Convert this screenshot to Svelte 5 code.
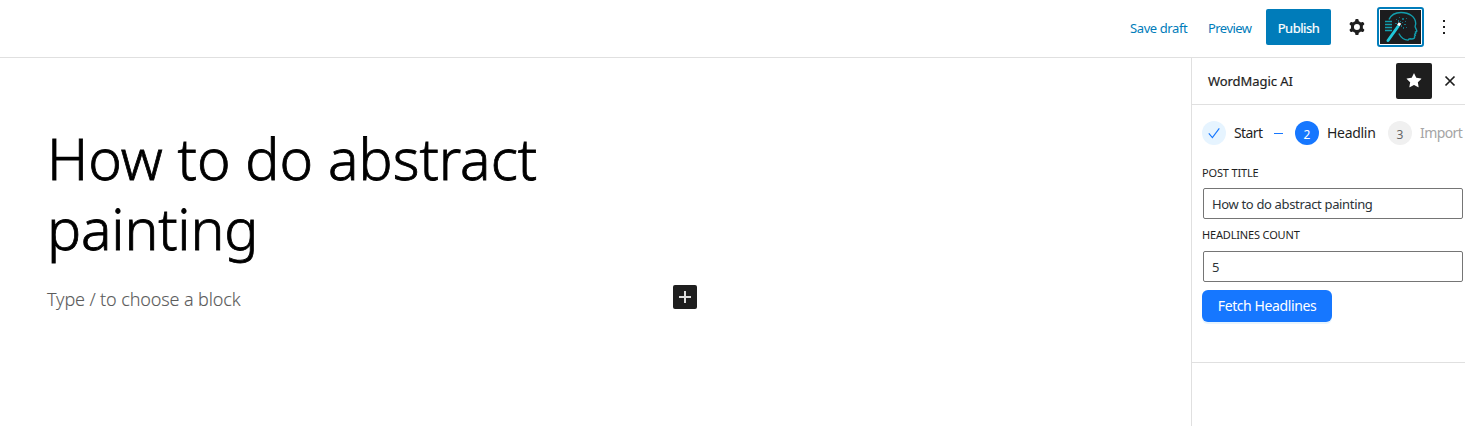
<script>
  let title = $state('How to do abstract painting');
  let count = $state('5');
</script>

<div class="editor">
  <header>
    <button class="link draft">Save draft</button>
    <button class="link preview">Preview</button>
    <button class="publish"><span>Publish</span></button>
    <button class="icon gear" aria-label="Settings">
      <svg width="24" height="24" viewBox="0 0 24 24"><path fill="#1e1e1e" fill-rule="evenodd" d="M10.289 4.836A1 1 0 0 1 11.275 4h1.306a1 1 0 0 1 .987.836l.244 1.466c.787.26 1.503.679 2.108 1.218l1.393-.522a1 1 0 0 1 1.216.437l.653 1.130a1 1 0 0 1-.23 1.273l-1.148.944a6.025 6.025 0 0 1 0 2.435l1.149.946a1 1 0 0 1 .23 1.272l-.653 1.130a1 1 0 0 1-1.216.437l-1.394-.522c-.605.54-1.320.958-2.108 1.218l-.244 1.466a1 1 0 0 1-.987.836h-1.306a1 1 0 0 1-.986-.836l-.244-1.466a5.995 5.995 0 0 1-2.108-1.218l-1.394.522a1 1 0 0 1-1.217-.436l-.653-1.131a1 1 0 0 1 .23-1.272l1.149-.946a6.026 6.026 0 0 1 0-2.435l-1.148-.944a1 1 0 0 1-.23-1.272l.653-1.131a1 1 0 0 1 1.217-.437l1.393.522a5.994 5.994 0 0 1 2.108-1.218l.244-1.466ZM14.929 12a3 3 0 1 1-6 0 3 3 0 0 1 6 0Z"/></svg>
    </button>
    <button class="plugin" aria-label="WordMagic AI">
      <svg width="41" height="34" viewBox="0 0 41 34">
        <rect width="41" height="34" fill="#1c1c1e"/>
        <g fill="none" stroke="#129dad" stroke-width="1.4">
          <path d="M9 9.500C11 5 15 2.500 21 2.500c8.500 0 14.500 4.500 14.700 11 0 1.700-.9 2.500-.5 3.500l1.500 3.600c.3.800 0 1.200-1.200 1.400l.2 1.600-1 .7.600 1-.8.900.1 1.200c-.3 1.700-1.600 1.800-4.500 1.400-1.200 0-1.700.5-2 1.300-3.500.1-7-2.500-9.300-6.600"/>
          <path d="M5 11.500h7M5 14.500h7M5 17.500h7M5 20.500h7"/>
        </g>
        <path d="m8 30.500 10-14" stroke="#20c8da" stroke-width="3" stroke-linecap="round"/>
        <path d="m18.300 15.500 1.700-2.500" stroke="#fff" stroke-width="3"/>
        <g fill="#126f7d"><path d="M16 9h1v1h-1zM19 7h1v1h-1zM22 8h2v2h-2zM25 11h1v1h-1zM24 14h2v1h-2zM22 12h1v1h-1zM23 17h1v2h-1zM26 17h1v1h-1zM15 13h2v1h-2zM18 10h1v2h-1zM21 15h1v2h-1zM20 11h1v1h-1zM26 8h1v1h-1z"/></g>
      </svg>
    </button>
    <button class="icon more" aria-label="Options">
      <svg width="24" height="24" viewBox="0 0 24 24" fill="#1e1e1e"><path d="M11 5h2v2h-2zM11 11h2v2h-2zM11 17h2v2h-2z"/></svg>
    </button>
  </header>

  <div class="body">
    <main>
      <h1><span>How to do abstract</span><br /><span class="second">painting</span></h1>
      <div class="block">
        <p>Type / to choose a block</p>
        <button class="add" aria-label="Add block">
          <svg width="24" height="24" viewBox="0 0 24 24"><path d="M6 12h12M12 6v12" stroke="#dedede" stroke-width="2"/></svg>
        </button>
      </div>
    </main>

    <aside>
      <div class="panel-head">
        <strong>WordMagic AI</strong>
        <button class="star" aria-label="Unpin">
          <svg width="24" height="24" viewBox="0 0 24 24"><path fill="#fff" d="m11.776 4.454a.25.25 0 0 1 .448 0l2.069 4.192a.25.25 0 0 0 .188.137l4.626.672a.25.25 0 0 1 .139.426l-3.348 3.263a.25.25 0 0 0-.072.222l.79 4.607a.25.25 0 0 1-.362.263l-4.138-2.175a.25.25 0 0 0-.232 0l-4.138 2.175a.25.25 0 0 1-.363-.263l.79-4.607a.25.25 0 0 0-.071-.222L4.754 9.881a.25.25 0 0 1 .139-.426l4.626-.672a.25.25 0 0 0 .188-.137z"/></svg>
        </button>
        <button class="close" aria-label="Close">
          <svg width="12" height="12" viewBox="0 0 12 12"><path d="m1.500 1.500 9 9m0-9-9 9" stroke="#1e1e1e" stroke-width="1.700"/></svg>
        </button>
      </div>
      <section>
        <ol class="steps">
          <li class="done">
            <i><svg width="14" height="14" viewBox="0 0 14 14"><path d="m1.800 7.300 3.600 4.300L12.300 2.300" fill="none" stroke="#1677ff" stroke-width="1.150"/></svg></i>
            <span>Start</span><b></b>
          </li>
          <li class="active"><i>2</i><span>Headlines</span></li>
          <li class="wait"><i>3</i><span>Import</span></li>
        </ol>
        <label class="l1" for="title"><span>POST TITLE</span></label>
        <input id="title" bind:value={title} />
        <label class="l2" for="count"><span>HEADLINES COUNT</span></label>
        <input id="count" class="count" bind:value={count} />
        <button class="fetch"><span>Fetch Headlines</span></button>
      </section>
    </aside>
  </div>
</div>

<style>
  :global(body) { margin: 0; background: #fff; }
  * { box-sizing: border-box; }
  button { border: 0; padding: 0; margin: 0; background: none; font: inherit; color: inherit; flex: none; }
  svg { display: block; }
  .editor { width: 1465px; height: 426px; overflow: hidden; display: flex; flex-direction: column; font: 13px/18px "Noto Sans", "Open Sans", sans-serif; color: #1e1e1e; }
  header { height: 58px; flex: none; border-bottom: 1px solid #e0e0e0; display: flex; align-items: center; justify-content: flex-end; padding: 0 9px 3px 0; }
  .link { color: #007cba; text-align: left; white-space: nowrap; padding-top: 2px; }
  .draft { width: 78px; letter-spacing: -0.4px; }
  .preview { width: 58px; letter-spacing: -0.55px; }
  .publish { width: 65px; height: 36px; padding-top: 2px; background: #007cba; color: #fff; border-radius: 2px; letter-spacing: -0.45px; -webkit-text-stroke: 0.2px; }
  .gear { margin-left: 14px; }
  .plugin { width: 47px; height: 40px; margin-left: 8px; border: 2px solid #007cba; border-radius: 3px; padding: 1px; }
  .more { margin-left: 8px; }
  .body { display: flex; flex: 1; min-height: 0; }
  main { flex: 1; padding: 65px 0 0 47px; }
  h1 { margin: 0; font-size: 57px; line-height: 70px; font-weight: 300; color: #000; letter-spacing: 0; white-space: nowrap; -webkit-text-stroke: 0.8px; }
  .second { letter-spacing: -0.2px; }
  .block { display: flex; justify-content: space-between; align-items: center; width: 650px; height: 24px; margin-top: 22px; }
  p { margin: 0; padding-top: 4px; font-size: 18px; line-height: 24px; font-weight: 300; color: #5c5c5c; letter-spacing: -0.12px; -webkit-text-stroke: 0.1px; }
  .add { background: #1e1e1e; border-radius: 2px; }
  aside { width: 274px; border-left: 1px solid #e0e0e0; overflow: hidden; }
  .panel-head { height: 47px; border-bottom: 1px solid #e0e0e0; display: flex; align-items: center; padding-left: 16px; }
  strong { flex: 1; font-weight: 400; letter-spacing: -0.07px; -webkit-text-stroke: 0.2px; }
  .star { width: 36px; height: 36px; background: #1e1e1e; border-radius: 2px; display: grid; place-items: center; }
  .close { margin: 0 9px 0 12px; }
  section { height: 258px; border-bottom: 1px solid #e0e0e0; padding: 16px 1px 0 10px; }
  .steps { list-style: none; margin: 0; padding: 0; height: 24px; display: flex; font-size: 14px; line-height: 24px; color: #1f1f1f; }
  li { display: flex; flex: none; }
  i { width: 24px; height: 24px; border-radius: 50%; font-style: normal; font-size: 12px; line-height: 26px; text-align: center; display: grid; place-items: center; margin-right: 8px; }
  .active i, .wait i { padding-top: 1px; }
  .done { width: 93px; }
  .done span { width: 29px; letter-spacing: -0.6px; }
  .done i { background: #e6f4ff; }
  .done b { width: 9px; height: 1px; background: #1677ff; margin: 12px 0 0 11px; }
  .active { width: 93px; }
  .active span { width: 49px; overflow: hidden; letter-spacing: -0.3px; }
  .active i { background: #1677ff; color: #fff; }
  .wait i { background: #f0f0f0; color: #666; }
  .wait span { color: #a5a5a5; letter-spacing: -0.6px; }
  label { display: block; font-size: 11px; line-height: 15px; letter-spacing: -0.16px; }
  .l1 { margin-top: 20px; }
  .l2 { margin-top: 8px; }
  input { display: block; width: 260px; height: 31px; margin: 8px 0 0 1px; padding: 0 8px; border: 1px solid #757575; border-radius: 2px; font: 13px "Noto Sans", "Open Sans", sans-serif; color: #2c3338; outline: none; letter-spacing: -0.34px; }
  .count { margin-top: 9px; }
  .fetch { display: block; width: 130px; height: 32px; margin-top: 8px; background: #1677ff; color: #fff; border-radius: 6px; box-shadow: 0 2px 0 rgba(5, 145, 255, .1); font-size: 14px; letter-spacing: -0.4px; }
</style>
